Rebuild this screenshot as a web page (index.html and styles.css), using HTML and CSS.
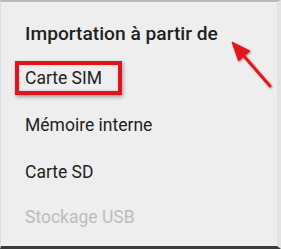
FILE: index.html
```html
<!DOCTYPE html>
<html lang="fr">
<head>
<meta charset="utf-8">
<link rel="stylesheet" href="styles.css">
</head>
<body>
<div class="dialog">
  <h2 class="title">Importation à partir de</h2>
  <ul class="list">
    <li class="item"><span class="label marked">Carte SIM</span></li>
    <li class="item"><span class="label">Mémoire interne</span></li>
    <li class="item"><span class="label">Carte SD</span></li>
    <li class="item disabled"><span class="label">Stockage USB</span></li>
  </ul>
  <svg class="arrow" width="281" height="249" viewBox="0 0 281 249">
    <defs>
      <filter id="sh" x="-50%" y="-50%" width="200%" height="200%">
        <feGaussianBlur in="SourceAlpha" stdDeviation="1.2"/>
        <feOffset dx="1" dy="1" result="b"/>
        <feComponentTransfer><feFuncA type="linear" slope="0.35"/></feComponentTransfer>
        <feMerge><feMergeNode/><feMergeNode in="SourceGraphic"/></feMerge>
      </filter>
    </defs>
    <g filter="url(#sh)" fill="#e3141c" stroke="#e3141c">
      <line x1="270" y1="86" x2="243" y2="55" stroke-width="3" stroke-linecap="round"/>
      <polygon points="232,42 250,51 238.5,61" stroke-width="1" stroke-linejoin="round"/>
    </g>
  </svg>
</div>
</body>
</html>
```

FILE: styles.css
```css
html, body {
  margin: 0;
  padding: 0;
}
body {
  width: 281px;
  height: 249px;
  overflow: hidden;
  background: #efefef;
  font-family: Roboto, "Noto Sans", "Liberation Sans", sans-serif;
}
.dialog {
  position: relative;
  box-sizing: border-box;
  width: 281px;
  height: 249px;
  background: #eeeeee;
  border-top: 2px solid #b9b9b9;
  border-bottom: 3px solid #3a3a3a;
  border-left: 1px solid #d5dde2;
  border-right: 4px solid #e3e3e3;
  padding-top: 20px;
}
.title {
  margin: 0 0 8px 0;
  padding-left: 24px;
  font-size: 19.2px;
  line-height: 24px;
  font-weight: 500;
  color: #1f1f1f;
}
.list {
  list-style: none;
  margin: 0;
  padding: 0;
}
.item {
  height: 47px;
  display: flex;
  align-items: center;
  padding-left: 24px;
  font-size: 17.5px;
  color: #222222;
}
.label {
  line-height: 22px;
}
.marked {
  margin-left: -10px;
  padding: 2px 16px 2px 6px;
  border: 4px solid #e0141c;
  box-shadow: 1px 2px 4px rgba(0, 0, 0, 0.35), inset 0 0 3px rgba(0, 0, 0, 0.2);
}
.disabled {
  color: #bcbcbc;
  height: 43px;
}
.arrow {
  position: absolute;
  left: -1px;
  top: -2px;
  pointer-events: none;
}
```
